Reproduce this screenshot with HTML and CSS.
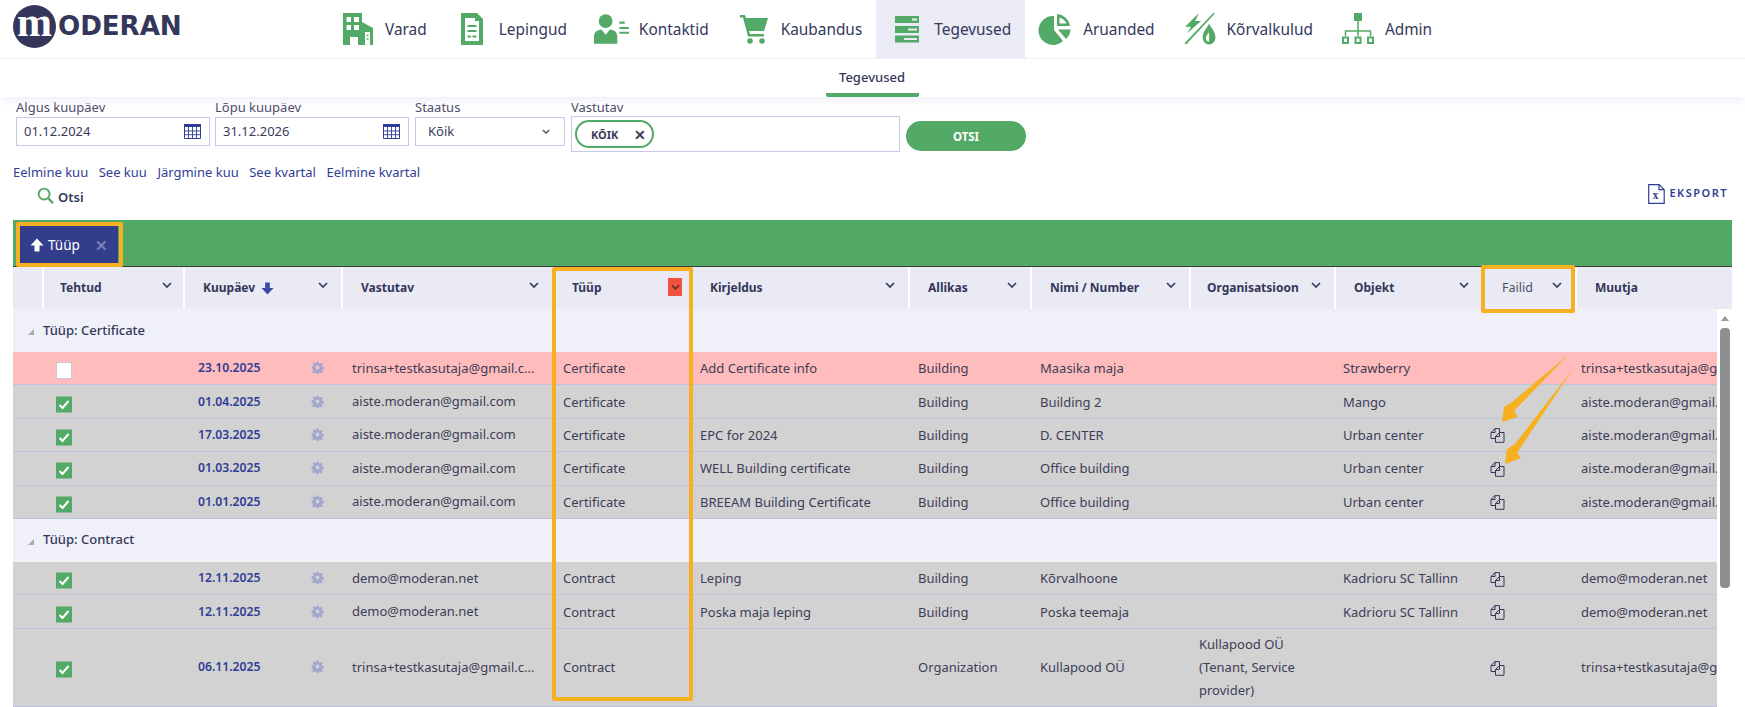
FILE: index.html
```html
<!DOCTYPE html>
<html lang="et">
<head>
<meta charset="utf-8">
<title>Moderan - Tegevused</title>
<link rel="stylesheet" href="styles.css">
</head>
<body>
<svg width="0" height="0" class="defs">
  <defs>
    <symbol id="gear" viewBox="0 0 24 24"><path d="M10 1h4l.6 3.2 1.9.8 2.7-1.9 2.8 2.8-1.9 2.7.8 1.9 3.1.5v4l-3.1.6-.8 1.9 1.9 2.7-2.8 2.8-2.7-1.9-1.9.8-.6 3.1h-4l-.6-3.1-1.9-.8-2.7 1.9-2.8-2.8 1.9-2.7-.8-1.9L1 14v-4l3.1-.5.8-1.9L3 4.900l2.800-2.800 2.700 1.900 1.900-.8zM12 8.500a3.500 3.500 0 1 0 0 7 3.500 3.500 0 0 0 0-7z" fill-rule="evenodd"/></symbol>
    <symbol id="copy" viewBox="0 0 15 15"><path d="M5 .6 1 4.500V10.500H5.500M5 .6H9.500V4.500M5 .6V4.500H1M9.500 4.500H14V14.300H5.500V8.500ZM9.500 4.500V8.500H5.500" fill="none" stroke="currentColor" stroke-width="1"/></symbol>
    <symbol id="chev" viewBox="0 0 10 6"><path d="M1 1l4 4 4-4" fill="none" stroke="currentColor" stroke-width="1.700"/></symbol>
    <symbol id="cal" viewBox="0 0 17 15"><path d="M.5.500h16v14H.5z" fill="#fff" stroke="#2f3d96"/><path d="M0 0h17v3H0z" fill="#2f3d96"/><path d="M.5 7h16M.5 10.700h16M4.500 3v12M8.500 3v12M12.500 3v12" fill="none" stroke="#2f3d96" stroke-width=".9"/></symbol>
    <symbol id="check" viewBox="0 0 16 16"><path d="M0 0h16v16H0z" fill="#53a966"/><path d="M3.500 8.500l3 3 6-7" fill="none" stroke="#fff" stroke-width="2"/></symbol>
    <symbol id="arrow-up" viewBox="0 0 14 14"><path d="M7 .5 13.500 7.500H9.500V13.500H4.500V7.500H.5z"/></symbol>
    <symbol id="arrow-down" viewBox="0 0 14 14"><path d="M7 13.500 13.500 6.500H9.500V.5H4.500V6.500H.5z"/></symbol>
  </defs>
</svg>

<header class="top">
  <div class="logo"><span class="logo-m">m</span><span class="logo-t">ODERAN</span></div>
  <nav class="nav">
    <a class="nav-item">
      <svg class="nav-ico" viewBox="0 0 32 32"><path class="g" fill-rule="evenodd" d="M1 0h19v9l11 6v17H1zM4.500 4v5H9V4zM12 4v5h5V4zM4.500 12v5H9v-5zM12 12v5h5v-5zM8 24v8h8v-8zM23 19v13h5V19z"/><path d="M24.500 22.500h2M24.500 26h2" stroke="#53a966" stroke-width="1.500"/></svg>
      <span>Varad</span></a>
    <a class="nav-item">
      <svg class="nav-ico" viewBox="0 0 32 32"><path class="g" fill-rule="evenodd" d="M5 0h16l6 6v26H5zM9 5v23h14V8h-4V5zM11.500 12h9v2h-9zM11.500 17h9v2h-9zM11.500 22.500h3.500v2h-3.500zM16.500 22.500h4v2h-4z"/></svg>
      <span>Lepingud</span></a>
    <a class="nav-item">
      <svg class="nav-ico nav-wide" viewBox="0 0 34 28"><circle class="g" cx="11" cy="6.500" r="6.500"/><path class="g" d="M0 28v-7c0-4 3-6 7-6.500l4 5 4-5c4 .5 7 2.500 7 6.500v7z"/><path class="g" d="M24 7h5v2h-5zM24 12h9v2h-9zM24 16.500h9v2h-9z"/></svg>
      <span>Kontaktid</span></a>
    <a class="nav-item">
      <svg class="nav-ico" viewBox="0 0 32 32"><path class="g" d="M2 2h5l1 3h22l-4 13H11l1 3h14v2.500H10L5 4.500H2z"/><circle class="g" cx="12" cy="28" r="2.800"/><circle class="g" cx="24" cy="28" r="2.800"/></svg>
      <span>Kaubandus</span></a>
    <a class="nav-item is-active">
      <svg class="nav-ico" viewBox="0 0 32 32"><path class="g" fill-rule="evenodd" d="M4 3h24v7H4zM21 5.500v2h5v-2zM4 13h24v7H4zM17 15.500v2h9v-2zM4 22.500h24v7H4zM13 25v2h13v-2z"/></svg>
      <span>Tegevused</span></a>
    <a class="nav-item">
      <svg class="nav-ico" viewBox="0 0 32 32"><path class="g" d="M14 3v14l9 11A14.500 14.500 0 1 1 14 3z"/><path class="g" fill-rule="evenodd" d="M17 1a14 14 0 0 1 13 12H17zM19.500 4.500v6h7a11 11 0 0 0-7-6z"/><path class="g" d="M18 16.500l12.500.000A14 14 0 0 1 26 26z"/></svg>
      <span>Aruanded</span></a>
    <a class="nav-item">
      <svg class="nav-ico nav-wide" viewBox="0 0 32 30"><path class="g" d="M30 .5 3 29.500l-1.500-1.200L28.500 0z"/><path class="g" d="M15 0 2 13h5.500L4 19 17 7.500h-5.500z"/><path class="g" fill-rule="evenodd" d="M24.500 10c3 5 6 8 6 13a6 6.500 0 0 1-12 0c0-5 3-8 6-13zM24.500 18c-1.500 2-3 3.500-3 5.500a3 3.500 0 0 0 3 3.500z"/></svg>
      <span>Kõrvalkulud</span></a>
    <a class="nav-item">
      <svg class="nav-ico" viewBox="0 0 32 32"><path class="g" d="M12 0h8v8h-8z"/><path d="M16 8v10M3.500 23v-5h25v5M16 18v5" fill="none" stroke="#53a966" stroke-width="1.500"/><path d="M1 24.500h5v5.500H1zM13.500 24.500h5v5.500h-5zM26 24.500h5v5.500h-5z" fill="none" stroke="#53a966" stroke-width="2"/></svg>
      <span>Admin</span></a>
  </nav>
</header>

<div class="subnav"><a class="subnav-item">Tegevused</a></div>

<section class="filters">
  <div class="field f-date"><label>Algus kuupäev</label>
    <div class="box"><span>01.12.2024</span><svg class="cal"><use href="#cal"/></svg></div></div>
  <div class="field f-date"><label>Lõpu kuupäev</label>
    <div class="box"><span>31.12.2026</span><svg class="cal"><use href="#cal"/></svg></div></div>
  <div class="field f-status"><label>Staatus</label>
    <div class="box box-sel"><span>Kõik</span><svg class="chev-s"><use href="#chev"/></svg></div></div>
  <div class="field f-resp"><label>Vastutav</label>
    <div class="box box-multi"><span class="tag"><b>KÕIK</b><i>✕</i></span></div></div>
  <button class="search-btn">OTSI</button>
</section>

<div class="quick">
  <a>Eelmine kuu</a><a>See kuu</a><a>Järgmine kuu</a><a>See kvartal</a><a>Eelmine kvartal</a>
</div>

<div class="tools">
  <div class="otsi">
    <svg viewBox="0 0 18 18" class="mag"><circle cx="7.500" cy="7.500" r="5.800" fill="none" stroke="#53a966" stroke-width="2"/><path d="M12 12l5 5" stroke="#53a966" stroke-width="2.500"/></svg>
    <span>Otsi</span>
  </div>
  <a class="export">
    <svg viewBox="0 0 17 20" class="xls"><path d="M.7.700h10.500l5 5v13.600H.7z M11 .7v5h5" fill="#fff" stroke="#2f3d96" stroke-width="1.200"/></svg>
    <span class="xls-x">x</span>
    <span>EKSPORT</span>
  </a>
</div>

<main class="grid">
  <div class="band">
    <div class="group-chip"><svg class="up"><use href="#arrow-up"/></svg><span>Tüüp</span><span class="chip-x">✕</span></div>
  </div>
  <div class="thead">
    <div class="th th-sp"></div>
    <div class="th th-first">Tehtud<svg class="ch ch-first"><use href="#chev"/></svg></div>
    <div class="th">Kuupäev<svg class="down"><use href="#arrow-down"/></svg><svg class="ch"><use href="#chev"/></svg></div>
    <div class="th">Vastutav<svg class="ch"><use href="#chev"/></svg></div>
    <div class="th">Tüüp<span class="ch-red"><svg class="ch-in"><use href="#chev"/></svg></span></div>
    <div class="th">Kirjeldus<svg class="ch"><use href="#chev"/></svg></div>
    <div class="th">Allikas<svg class="ch"><use href="#chev"/></svg></div>
    <div class="th">Nimi / Number<svg class="ch"><use href="#chev"/></svg></div>
    <div class="th th-tight">Organisatsioon<svg class="ch"><use href="#chev"/></svg></div>
    <div class="th">Objekt<svg class="ch"><use href="#chev"/></svg></div>
    <div class="th th-light">Failid<svg class="ch"><use href="#chev"/></svg></div>
    <div class="th">Muutja</div>
  </div>
  <div class="tbody-wrap">
    <div class="tbody">
      <div class="group"><span class="tri"></span>Tüüp: Certificate</div>

      <div class="row pink">
        <span></span><span class="c-chk"><span class="cb"></span></span><span class="c-date">23.10.2025<svg class="gear"><use href="#gear"/></svg></span><span class="c-txt">trinsa+testkasutaja@gmail.c...</span><span class="c-txt">Certificate</span><span class="c-txt">Add Certificate info</span><span class="c-txt">Building</span><span class="c-txt">Maasika maja</span><span class="c-txt"></span><span class="c-txt">Strawberry</span><span class="c-ico"></span><span class="c-clip">trinsa+testkasutaja@gmail.com</span>
      </div>
      <div class="row">
        <span></span><span class="c-chk"><svg class="cbk"><use href="#check"/></svg></span><span class="c-date">01.04.2025<svg class="gear"><use href="#gear"/></svg></span><span class="c-txt">aiste.moderan@gmail.com</span><span class="c-txt">Certificate</span><span class="c-txt"></span><span class="c-txt">Building</span><span class="c-txt">Building 2</span><span class="c-txt"></span><span class="c-txt">Mango</span><span class="c-ico"></span><span class="c-clip">aiste.moderan@gmail.com</span>
      </div>
      <div class="row">
        <span></span><span class="c-chk"><svg class="cbk"><use href="#check"/></svg></span><span class="c-date">17.03.2025<svg class="gear"><use href="#gear"/></svg></span><span class="c-txt">aiste.moderan@gmail.com</span><span class="c-txt">Certificate</span><span class="c-txt">EPC for 2024</span><span class="c-txt">Building</span><span class="c-txt">D. CENTER</span><span class="c-txt"></span><span class="c-txt">Urban center</span><span class="c-ico"><svg class="copy"><use href="#copy"/></svg></span><span class="c-clip">aiste.moderan@gmail.com</span>
      </div>
      <div class="row">
        <span></span><span class="c-chk"><svg class="cbk"><use href="#check"/></svg></span><span class="c-date">01.03.2025<svg class="gear"><use href="#gear"/></svg></span><span class="c-txt">aiste.moderan@gmail.com</span><span class="c-txt">Certificate</span><span class="c-txt">WELL Building certificate</span><span class="c-txt">Building</span><span class="c-txt">Office building</span><span class="c-txt"></span><span class="c-txt">Urban center</span><span class="c-ico"><svg class="copy"><use href="#copy"/></svg></span><span class="c-clip">aiste.moderan@gmail.com</span>
      </div>
      <div class="row">
        <span></span><span class="c-chk"><svg class="cbk"><use href="#check"/></svg></span><span class="c-date">01.01.2025<svg class="gear"><use href="#gear"/></svg></span><span class="c-txt">aiste.moderan@gmail.com</span><span class="c-txt">Certificate</span><span class="c-txt">BREEAM Building Certificate</span><span class="c-txt">Building</span><span class="c-txt">Office building</span><span class="c-txt"></span><span class="c-txt">Urban center</span><span class="c-ico"><svg class="copy"><use href="#copy"/></svg></span><span class="c-clip">aiste.moderan@gmail.com</span>
      </div>

      <div class="group"><span class="tri"></span>Tüüp: Contract</div>

      <div class="row">
        <span></span><span class="c-chk"><svg class="cbk"><use href="#check"/></svg></span><span class="c-date">12.11.2025<svg class="gear"><use href="#gear"/></svg></span><span class="c-txt">demo@moderan.net</span><span class="c-txt">Contract</span><span class="c-txt">Leping</span><span class="c-txt">Building</span><span class="c-txt">Kõrvalhoone</span><span class="c-txt"></span><span class="c-txt">Kadrioru SC Tallinn</span><span class="c-ico"><svg class="copy"><use href="#copy"/></svg></span><span class="c-clip">demo@moderan.net</span>
      </div>
      <div class="row">
        <span></span><span class="c-chk"><svg class="cbk"><use href="#check"/></svg></span><span class="c-date">12.11.2025<svg class="gear"><use href="#gear"/></svg></span><span class="c-txt">demo@moderan.net</span><span class="c-txt">Contract</span><span class="c-txt">Poska maja leping</span><span class="c-txt">Building</span><span class="c-txt">Poska teemaja</span><span class="c-txt"></span><span class="c-txt">Kadrioru SC Tallinn</span><span class="c-ico"><svg class="copy"><use href="#copy"/></svg></span><span class="c-clip">demo@moderan.net</span>
      </div>
      <div class="row row-tall">
        <span></span><span class="c-chk"><svg class="cbk"><use href="#check"/></svg></span><span class="c-date">06.11.2025<svg class="gear"><use href="#gear"/></svg></span><span class="c-txt">trinsa+testkasutaja@gmail.c...</span><span class="c-txt">Contract</span><span class="c-txt"></span><span class="c-txt">Organization</span><span class="c-txt">Kullapood OÜ</span><span class="c-wrap">Kullapood OÜ (Tenant, Service provider)</span><span class="c-txt"></span><span class="c-ico"><svg class="copy"><use href="#copy"/></svg></span><span class="c-clip">trinsa+testkasutaja@gmail.com</span>
      </div>
      <div class="row pink"></div>
    </div>
    <div class="scroll"><span class="sc-up"></span><span class="sc-thumb"></span></div>
  </div>
</main>

<div class="mark mark-chip"></div>
<div class="mark mark-col"></div>
<div class="mark mark-files"></div>
<svg class="arrows" viewBox="0 0 1745 707">
  <polygon points="1568,355 1512,402 1504,407 1502,422 1518,417 1514,411"/>
  <polygon points="1573,369 1515,444 1507,449 1505,464 1521,458 1517,453"/>
</svg>
</body>
</html>
```
FILE: styles.css
```css
* { box-sizing: border-box; }
html, body { margin: 0; height: 707px; overflow: hidden; background: #fff; }
body { position: relative; font-family: "Noto Sans", "Open Sans", sans-serif; font-size: 13px; color: #3a3a5c; }
.defs { position: absolute; }
.g { fill: #53a966; }

.top { height: 59px; display: flex; border-bottom: 1px solid #eeeef9; }
.logo { width: 326.500px; padding: 5px 0 0 13px; display: flex; align-items: flex-start; color: #34375a; }
.logo-m { width: 43px; height: 43px; border-radius: 50%; background: #34375a; color: #fff; font: 700 42px/35px "Liberation Serif", serif; text-align: center; flex: none; }
.logo-t { font: 700 26.200px/43px "DejaVu Sans", sans-serif; letter-spacing: -.1px; margin-left: 2px; }
.nav { display: flex; height: 58px; }
.nav-item { display: flex; align-items: center; padding: 0 13.500px; gap: 9px; font-size: 15.400px; color: #34375a; }
.nav-item.is-active { background: #eaebf5; }
.nav-ico { width: 36px; height: 32px; flex: none; }

.subnav { height: 38px; display: flex; justify-content: center; box-shadow: 0 6px 8px -2px rgba(220,222,240,.45); position: relative; }
.subnav-item { width: 93px; text-align: center; font-size: 13px; font-weight: 500; line-height: 36px; border-bottom: 4px solid #53a966; border-radius: 0 0 2px 2px; height: 38px; color: #34375a; position: relative; left: -0.500px; }

.filters { display: flex; align-items: flex-start; padding: 1px 0 0 16px; height: 74px; }
.field { display: flex; flex-direction: column; }
.field label { font-size: 13px; line-height: 19px; color: #4a4a66; }
.f-date { width: 194px; margin-right: 5px; }
.f-date + .f-date { margin-right: 6px; }
.f-status { width: 150px; margin-right: 6px; }
.f-resp { width: 329px; margin-right: 6px; }
.box { height: 29px; border: 1px solid #c5c9e6; display: flex; align-items: center; justify-content: space-between; padding: 0 8px 1px 7px; background: #fff; }
.box-sel { padding: 0 14px 1px 12px; }
.box-multi { height: 36px; padding: 0 3px; justify-content: flex-start; margin-top: -1px; }
.cal { width: 17px; height: 15px; }
.chev-s { width: 8px; height: 5px; color: #555; }
.tag { display: inline-flex; align-items: center; height: 28px; width: 79px; border: 2px solid #53a966; border-radius: 14px; padding: 0 6px 0 14px; justify-content: space-between; }
.tag b { font-size: 11px; font-weight: 700; }
.tag i { font-style: normal; font-weight: 700; font-size: 14px; }
.search-btn { margin-top: 23px; width: 120px; height: 30px; border: 0; border-radius: 15px; background: #53a966; color: #fff; font: 700 11.500px "Noto Sans", sans-serif; }

.quick { display: flex; gap: 10.500px; padding-left: 13px; height: 22px; line-height: 22px; font-size: 13px; color: #2f3d96; margin-top: -10px; }
.tools { height: 37px; display: flex; justify-content: space-between; padding: 4px 17px 0 37px; }
.otsi { display: flex; align-items: flex-start; gap: 4px; font-weight: 600; color: #34375a; line-height: 20px; }
.mag { width: 17px; height: 17px; }
.export { display: flex; align-items: flex-start; gap: 4px; position: relative; font-size: 11px; font-weight: 600; letter-spacing: 1.500px; color: #2f3d96; line-height: 18px; margin-top: -3px; margin-right: 0; }
.xls { width: 17px; height: 20px; }
.xls-x { position: absolute; left: 4px; top: 4px; font: 700 12px/14px "Liberation Serif", serif; letter-spacing: 0; }

.grid { margin: 0 13px; }
.band { height: 47px; background: #53a966; border-bottom: 1px solid #3c3c3c; padding: 6px 0 0 7px; }
.group-chip { width: 98px; height: 38px; background: #323d8b; color: #fff; display: flex; align-items: center; padding-left: 10px; gap: 4px; font-size: 13.500px; }
.up { width: 14px; height: 14px; fill: #fff; }
.chip-x { margin-left: 11px; color: #7a82b8; font-weight: 700; font-size: 15px; }

.thead, .row { display: grid; grid-template-columns: 29px 141px 158px 211px 138px 218px 122px 159px 145px 148px 93px 1fr; }
.thead { height: 42px; background: #e9eaf3; }
.th { position: relative; display: flex; align-items: center; padding: 0 0 2px 18px; font-weight: 700; color: #34375a; border-left: 2px solid #fff; font-size: 12px; white-space: nowrap; }
.th-sp { border-left: 0; }
.th-first { padding-left: 16px; }
.th-tight { padding-left: 16px; }
.th-light { font-weight: 400; color: #4f4f66; font-size: 12.500px; }
.ch { position: absolute; right: 13px; top: 15px; width: 10px; height: 6px; color: #3a3a5c; }
.ch-first { right: 11px; }
.ch-red { position: absolute; right: 8px; top: 11px; width: 14px; height: 18px; background: #f0523f; display: flex; align-items: center; justify-content: center; }
.ch-in { width: 9px; height: 6px; color: #5b2b2b; }
.down { width: 13px; height: 13px; fill: #3a48a8; margin: 3px 0 0 6px; }

.tbody-wrap { display: flex; }
.tbody { width: 1704px; flex: none; }
.group { height: 43px; background: #eff0f8; display: flex; align-items: center; padding: 0 0 2px 30px; font-weight: 500; font-size: 13px; position: relative; color: #34375a; }
.tri { position: absolute; left: 15px; top: 20px; width: 0; height: 0; border-left: 6px solid transparent; border-bottom: 6px solid #aaa; }
.row { height: 33.400px; background: #d2d2d2; border-bottom: 1px solid #bfc2d8; align-items: center; font-size: 13px; color: #3d3d58; white-space: nowrap; }
.row-tall { height: 78px; }
.pink { background: #ffbcbc; }
.c-chk { display: flex; padding: 5px 0 0 14px; }
.cb { width: 16px; height: 17px; background: #fff; border: 1px solid #c8c8d0; }
.cbk { width: 16px; height: 17px; }
.c-date { position: relative; padding-left: 15px; font-weight: 600; font-size: 12.200px; color: #2f3d96; padding-bottom: 1px; }
.gear { position: absolute; left: 128px; top: 2px; width: 13px; height: 13px; fill: #a3a7cf; }
.c-txt { padding: 0 0 0 11px; }
.c-txt:nth-child(4) { padding-bottom: 1px; }
.c-txt:nth-child(6) { padding-left: 10px; }
.c-txt:nth-child(7) { padding-left: 10px; }
.c-txt:nth-child(8) { padding-left: 10px; }
.c-txt:nth-child(10) { padding-left: 9px; }
.c-wrap { padding-left: 10px; white-space: normal; line-height: 23px; width: 130px; }
.c-ico { padding: 2px 0 0 8px; display: flex; color: #34375a; }
.copy { width: 15px; height: 15px; }
.c-clip { overflow: hidden; padding: 0 0 0 6px; }

.scroll { position: relative; width: 15px; background: #fff; }
.sc-up { position: absolute; left: 4px; top: 7px; width: 0; height: 0; border: 4px solid transparent; border-top: 0; border-bottom: 5px solid #999; }
.sc-thumb { position: absolute; left: 3px; top: 19px; width: 10px; height: 260px; background: #8f8f8f; border-radius: 4px; }

.mark { position: absolute; border: 3px solid #f7b01f; border-radius: 2px; }
.mark-chip { left: 16px; top: 222px; width: 107px; height: 45px; border-width: 4px; }
.mark-col { left: 552px; top: 267px; width: 141px; height: 434px; border-width: 4px; }
.mark-files { left: 1481px; top: 265px; width: 94px; height: 48px; border-width: 4px; }
.arrows { position: absolute; left: 0; top: 0; width: 1745px; height: 707px; fill: #f7b01f; pointer-events: none; }
```
